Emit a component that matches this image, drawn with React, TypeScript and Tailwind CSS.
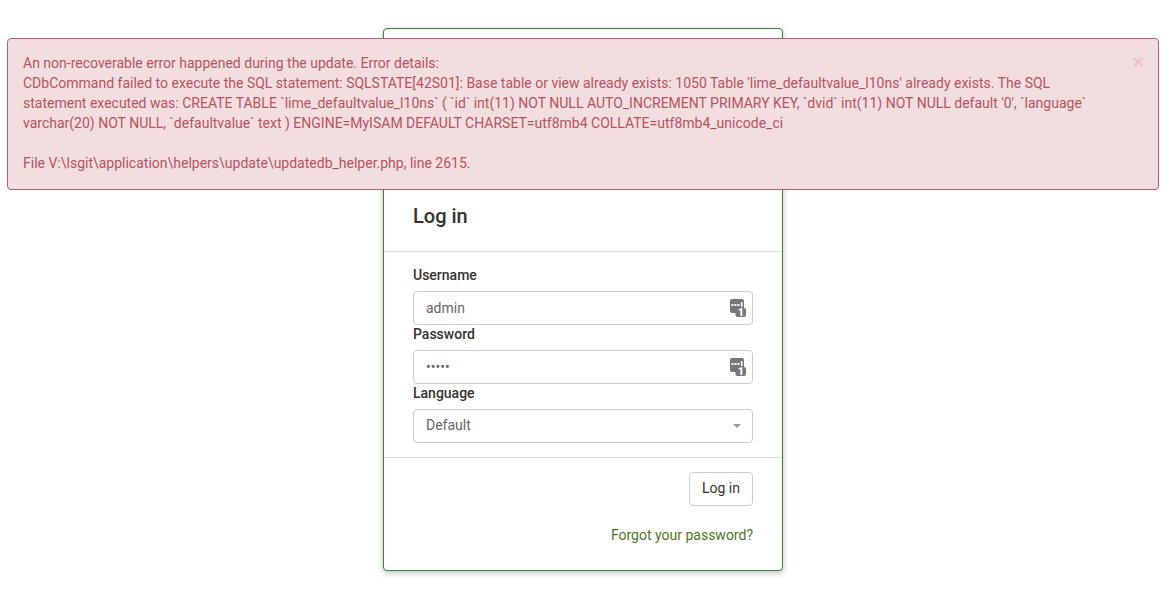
import React from "react";

const inputClass =
  "block w-full h-[34px] rounded-[4px] border border-[#cccccc] bg-white pl-3 pr-10 text-[14px] text-[#666666] outline-none";

const PassIcon = () => (
  <svg
    className="absolute right-[7px] top-[8px]"
    width="16"
    height="18"
    viewBox="0 0 16 18"
  >
    <rect x="0" y="0" width="14" height="14" rx="2" fill="#777777" />
    <rect x="1.5" y="5" width="2" height="2" fill="#fff" />
    <rect x="4.5" y="5" width="2" height="2" fill="#fff" />
    <rect x="7.5" y="5" width="2" height="2" fill="#fff" />
    <rect x="11" y="3" width="1.5" height="5" fill="#fff" />
    <rect x="5.5" y="9" width="10.5" height="9" rx="2" fill="#777777" />
    <text
      x="11"
      y="17.3"
      textAnchor="middle"
      fontSize="10"
      fontWeight="900"
      fill="#fff"
      fontFamily="Roboto, sans-serif"
    >
      1
    </text>
  </svg>
);

const Field = ({
  label,
  type,
  value,
}: {
  label: string;
  type: string;
  value: string;
}) => (
  <div>
    <label className="block h-[25px] font-medium leading-[18px] text-[#333333]">
      {label}
    </label>
    <div className="relative">
      <input type={type} defaultValue={value} className={inputClass} />
      <PassIcon />
    </div>
  </div>
);

export default function App() {
  return (
    <div className="relative min-h-[598px] bg-white font-['Roboto',sans-serif] text-[14px] leading-[20px] text-[#333333]">
      {/* error alert sits over the card */}
      <div className="absolute left-[7px] top-[38px] h-[152px] w-[1152px] rounded-[4px] border border-[#c05a6c] bg-[#f2dede] pl-[15px] pr-[60px] pt-[14px] text-[#b8525f]">
        <span className="absolute right-[14px] top-[13px] text-[21px] font-bold leading-[21px] text-[#ecc4cb]">
          ×
        </span>
        An non-recoverable error happened during the update. Error details:
        <br />
        CDbCommand failed to execute the SQL statement: SQLSTATE[42S01]: Base
        table or view already exists: 1050 Table 'lime_defaultvalue_l10ns'
        already exists. The SQL statement executed was: CREATE TABLE
        `lime_defaultvalue_l10ns` ( `id` int(11) NOT NULL AUTO_INCREMENT PRIMARY
        KEY, `dvid` int(11) NOT NULL default '0', `language` varchar(20) NOT
        NULL, `defaultvalue` text ) ENGINE=MyISAM DEFAULT CHARSET=utf8mb4
        COLLATE=utf8mb4_unicode_ci
        <br />
        <br />
        File V:\lsgit\application\helpers\update\updatedb_helper.php, line 2615.
      </div>

      <div className="flex justify-center pt-[28px] pr-[3px]">
        <div className="h-[543px] w-[400px] rounded-[4px] border border-[#328637] bg-white shadow-[0_2px_6px_rgba(0,0,0,0.25)]">
          <div className="flex h-[223px] items-end border-b border-[#dddddd] px-[29px] pb-[21px]">
            <h2 className="text-[20px] font-medium leading-[28px] text-[#333333]">
              Log in
            </h2>
          </div>

          <div className="flex flex-col border-b border-[#dddddd] px-[29px] py-[14px]">
            <Field label="Username" type="text" value="admin" />
            <Field label="Password" type="password" value="admin" />
            <div>
              <label className="block h-[25px] font-medium leading-[18px] text-[#333333]">
                Language
              </label>
              <div className="flex h-[34px] items-center justify-between rounded-[4px] border border-[#cccccc] bg-white pb-[2px] pl-3 pr-[11px] text-[#666666]">
                <span>Default</span>
                <span className="mt-[2px] h-0 w-0 border-x-[4px] border-t-[4px] border-x-transparent border-t-[#999999]" />
              </div>
            </div>
          </div>

          <div className="flex flex-col items-end px-[29px] pt-[14px]">
            <button className="h-[34px] w-[64px] rounded-[4px] border border-[#cccccc] bg-white pb-[2px] text-[14px] text-[#333333]">
              Log in
            </button>
            <a className="mt-[19px] text-[#4a7a1e]">Forgot your password?</a>
          </div>
        </div>
      </div>
    </div>
  );
}
